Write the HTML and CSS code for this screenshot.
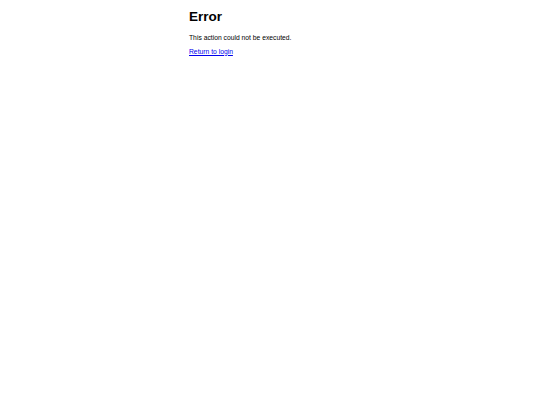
FILE: index.html
```html
<!DOCTYPE html>
<html lang="en">
<head>
<meta charset="utf-8">
<title>Error</title>
<link rel="stylesheet" href="styles.css">
</head>
<body>
<main class="error-page">
  <h1 class="error-title">Error</h1>
  <p class="error-message">This action could not be executed.</p>
  <p class="error-action"><a class="error-link" href="#">Return to login</a></p>
</main>
</body>
</html>
```

FILE: styles.css
```css
html, body {
  margin: 0;
  padding: 0;
  background: #ffffff;
}

body {
  font-family: "Liberation Sans", Arial, sans-serif;
  color: #000000;
}

.error-page {
  width: 162px;
  margin: 0 auto;
  padding-top: 9.05px;
}

.error-title {
  font-size: 13.5px;
  font-weight: bold;
  margin: 0 0 9.8px;
  line-height: normal;
}

.error-message,
.error-action {
  font-size: 6.75px;
  line-height: normal;
  margin: 6.75px 0;
}

.error-link {
  color: #0000ee;
  text-decoration: underline;
}
```
